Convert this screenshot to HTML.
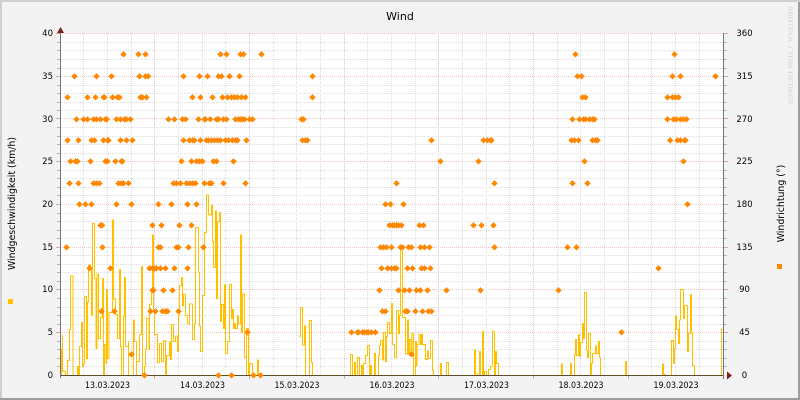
<!DOCTYPE html>
<html><head><meta charset="utf-8"><title>Wind</title>
<style>
html,body{margin:0;padding:0;width:800px;height:400px;overflow:hidden;background:#f3f3f3}
svg{display:block}
text{font-family:"DejaVu Sans","Liberation Sans",sans-serif;fill:#000}
</style></head><body>
<svg width="800" height="400" viewBox="0 0 800 400" xmlns="http://www.w3.org/2000/svg">
<defs>
<marker id="m" markerUnits="userSpaceOnUse" viewBox="-12 -12 24 24" markerWidth="24" markerHeight="24" refX="0" refY="0">
<path d="M.5-9.600L10.100 0 .5 9.600-9.100 0Z" fill="#ff8800"/>
</marker>
</defs>
<rect width="800" height="400" fill="#f3f3f3"/>
<path d="M0 1H800M1 0V400" stroke="#cfcfcf" stroke-width="2" fill="none" shape-rendering="crispEdges"/>
<path d="M0 399H800M799 2V400" stroke="#9e9e9e" stroke-width="2" fill="none" shape-rendering="crispEdges"/>
<rect x="60" y="33" width="663" height="342" fill="#fff"/>
<g shape-rendering="crispEdges" fill="none" stroke-width="1" stroke-dasharray="1 1">
<path stroke="#dddddd" d="M60 366.5H723M60 358.5H723M60 349.5H723M60 341.5H723M60 324.5H723M60 315.5H723M60 307.5H723M60 298.5H723M60 281.5H723M60 272.5H723M60 264.5H723M60 255.5H723M60 238.5H723M60 230.5H723M60 221.5H723M60 213.5H723M60 195.5H723M60 187.5H723M60 178.5H723M60 170.5H723M60 153.5H723M60 144.5H723M60 136.5H723M60 127.5H723M60 110.5H723M60 102.5H723M60 93.5H723M60 85.5H723M60 68.5H723M60 59.5H723M60 50.5H723M60 42.5H723"/>
<path stroke="#dddddd" d="M83.5 33V375M107.5 33V375M131.5 33V375M178.5 33V375M202.5 33V375M225.5 33V375M273.5 33V375M296.5 33V375M320.5 33V375M367.5 33V375M391.5 33V375M415.5 33V375M462.5 33V375M486.5 33V375M509.5 33V375M557.5 33V375M580.5 33V375M604.5 33V375M651.5 33V375M675.5 33V375M699.5 33V375"/>
<path stroke="#ecc2c2" d="M60 33.5H723M60 76.5H723M60 118.5H723M60 161.5H723M60 204.5H723M60 247.5H723M60 289.5H723M60 332.5H723"/>
<path stroke="#ecc2c2" d="M154.5 33V375M249.5 33V375M344.5 33V375M438.5 33V375M533.5 33V375M628.5 33V375"/>
</g>
<g shape-rendering="crispEdges" fill="none">
<path stroke="#b4b4b4" d="M57 42.5H60M57 50.5H60M57 59.5H60M57 68.5H60M57 85.5H60M57 93.5H60M57 102.5H60M57 110.5H60M57 127.5H60M57 136.5H60M57 144.5H60M57 153.5H60M57 170.5H60M57 178.5H60M57 187.5H60M57 195.5H60M57 213.5H60M57 221.5H60M57 230.5H60M57 238.5H60M57 255.5H60M57 264.5H60M57 272.5H60M57 281.5H60M57 298.5H60M57 307.5H60M57 315.5H60M57 324.5H60M57 341.5H60M57 349.5H60M57 358.5H60M57 366.5H60M724 42.5H727M724 50.5H727M724 59.5H727M724 68.5H727M724 85.5H727M724 93.5H727M724 102.5H727M724 110.5H727M724 127.5H727M724 136.5H727M724 144.5H727M724 153.5H727M724 170.5H727M724 178.5H727M724 187.5H727M724 195.5H727M724 213.5H727M724 221.5H727M724 230.5H727M724 238.5H727M724 255.5H727M724 264.5H727M724 272.5H727M724 281.5H727M724 298.5H727M724 307.5H727M724 315.5H727M724 324.5H727M724 341.5H727M724 349.5H727M724 358.5H727M724 366.5H727"/>
<path stroke="#d0a8a8" d="M56 33.5H60M56 76.5H60M56 118.5H60M56 161.5H60M56 204.5H60M56 247.5H60M56 289.5H60M56 332.5H60M724 33.5H728M724 76.5H728M724 118.5H728M724 161.5H728M724 204.5H728M724 247.5H728M724 289.5H728M724 332.5H728"/>
<path stroke="#d0a8a8" d="M154.5 375V379M249.5 375V379M344.5 375V379M438.5 375V379M533.5 375V379M628.5 375V379"/>
</g>
<g transform="translate(0,200) scale(.33333)" fill="none" stroke="#ffc000" stroke-width="3" stroke-linejoin="miter" shape-rendering="crispEdges">
<path d="M184 526V445V505H188V405V515H197V526H202V482H209V388H212V228H219V526H232V500H235V526H238V440H244V367H247V500H250V490H253V290H259V475H262V306H265V195H271V205H274V345H277V70H283V235H288V445H291V222H296V415H301V352H307V235H310V526H313V433H318V490H320V270H323V475H327V337H338V60H341V297H346V343H352V415H358V208H361V440H364V526H370V350H373V232H376V440H385V425V526H397V526H400V360H403V425H409V526V485H412H418V403H424V200H427V526H433V500H436V448H440V355H447V448H449V313H455V270H458V105H461V332H464V403H470H473V487H478V430H484V484H490V422H496V526H499V466H505H508V426H511V478H514V373H520V424H526V408H532V455H535V347H538V256H544V232H547V317H550V283H556V347H562V372H568V312H571H577V418H583V372H586V82H592H595V217H598V378H601V455H607V287H613V97H619V-15H625V45H634V16H637V125H640V203H646V33H649V295H652V65H658V37H661V365H664V313H670V385H673V255H676V460H682V425H688V253H694V355H697V328H700V385H703V370H706V385H712V348H715V372H718H721V105H724V398H727V282H733V472H739V526V385H745V526H748V490H757V526H772V480H775V517V526H778"/>
</g>
<g transform="translate(270,200) scale(.33333)" fill="none" stroke="#ffc000" stroke-width="3" shape-rendering="crispEdges">
<path d="M88 410H91V322H98V435H104V378H107V526H119V361H125V487H128V526M241 526V463H247V526H253V487H256V526H262V472H268V526H274V496H277V526H280V490H286V466H292V436H298V526H301V497H304V526H313V460H316V526H325V466H328V436H331V421H337V480H340V397H346V485H349V410H352V367H358V400H361H364V310H367V433H373V472H376H379V331H385V400H388V345H391V150H397V352H406V462H412V360H415V460H418V418H423V470H426V400H429H430V526H436V424H439V497H441V433H447V403H451V433H454V403H457V433H466V478H472V453H475V475H481V421H487V511H490V526M511 526V490H514V526M529 526V487H535V526M613 526V450H616V522H622V526H628V454H631V526H637V394H640V526H643V514H649V526H655V508H661V500H667V394H673V526H676V454H679V490H685V526"/>
</g>
<g transform="translate(530,200) scale(.33333)" fill="none" stroke="#ffc000" stroke-width="3" shape-rendering="crispEdges">
<path d="M94 526V492H97V526M121 526V490H124V526H133V463H136V418H139V466H145V403H148V470H151V427H157V370H160V415H163V277H169V451H172V472H175V400H181V526H184V490H187V460H196V438H199V460H205V424H208V472H211V526M286 526V484H289V526M397 526V492H400V523H406V526M424 526V421H430V490H433V445H436V348H440V388H445V430H449V360H451V268H460V356H463V316H472V455H475V400H481V283H484V397H487V496H493V526M574 526V388H580"/>
</g>
<path d="M60 375.5H723" stroke="#5e4c22" stroke-width="1" shape-rendering="crispEdges" fill="none"/>
<path d="M60.5 30V378M723.5 33V379" stroke="#777" stroke-width="1" shape-rendering="crispEdges" fill="none"/>
<path d="M60.5 27L64 33H57Z" fill="#7a2020"/>
<path d="M727 371.500L732 375.500L727 379.500Z" fill="#7a2020"/>
<g transform="scale(.33333)" fill="none" stroke="none" marker-start="url(#m)" marker-mid="url(#m)" marker-end="url(#m)">
<polyline points="370,163 415,163 436,163 661,163 679,163 721,163 730,163 784,163"/>
<polyline points="223,229 289,229 334,229 418,229 436,229 444,229 550,229 598,229 622,229 655,229 664,229 688,229 718,229"/>
<polyline points="202,292 262,292 286,292 310,292 313,292 337,292 352,292 358,292 421,292 427,292 439,292 577,292 601,292 637,292 667,292 682,292 694,292 703,292 712,292 724,292 736,292"/>
<polyline points="229,358 250,358 262,358 280,358 289,358 301,358 316,358 320,358 349,358 361,358 373,358 379,358 391,358 505,358 523,358 547,358 556,358 595,358 613,358 616,358 630,358 649,358 655,358 670,358 679,358 706,358 715,358 721,358 727,358 733,358 748,358 757,358"/>
<polyline points="202,421 235,421 274,421 283,421 310,421 322,421 325,421 361,421 379,421 397,421 550,421 568,421 577,421 583,421 601,421 619,421 625,421 634,421 643,421 652,421 661,421 676,421 685,421 697,421 706,421 712,421 739,421"/>
<polyline points="211,484 226,484 232,484 271,484 316,484 322,484 346,484 364,484 367,484 544,484 574,484 589,484 598,484 607,484 640,484 649,484 700,484"/>
<polyline points="208,550 235,550 280,550 289,550 298,550 355,550 364,550 370,550 385,550 520,550 529,550 541,550 559,550 568,550 577,550 586,550 613,550 628,550 634,550 670,550 736,550"/>
<polyline points="238,613 256,613 274,613 349,613 394,613 475,613 514,613 562,613 589,613"/>
<polyline points="301,676 306,676 457,676 484,676 538,676 574,676"/>
<polyline points="199,742 307,742 475,742 481,742 529,742 535,742 565,742 610,742"/>
<polyline points="268,805 331,805 448,805 457,805 463,805 469,805 481,805 496,805 523,805 562,805"/>
<polyline points="457,871 460,871 490,871 517,871"/>
<polyline points="304,934 343,934 451,934 466,934 487,934 496,934 502,934 535,934"/>
<polyline points="742,997 394,1063 433,1126 655,1126 694,1126 760,1126 781,1126"/>
</g>
<g transform="translate(270,0) scale(.33333)" fill="none" stroke="none" marker-start="url(#m)" marker-mid="url(#m)" marker-end="url(#m)">
<polyline points="127,229 127,292 94,358 100,358 97,421 106,421 112,421 484,421 640,421 652,421 661,421 664,421 511,484 625,484 379,550 673,550"/>
<polyline points="346,613 361,613 400,613"/>
<polyline points="358,676 367,676 373,676 379,676 385,676 394,676 448,676 460,676 610,676 634,676 670,676"/>
<polyline points="331,742 340,742 349,742 364,742 391,742 397,742 415,742 424,742 451,742 463,742 478,742 673,742"/>
<polyline points="334,805 352,805 364,805 373,805 379,805 412,805 427,805 454,805 463,805 481,805"/>
<polyline points="328,871 385,871 403,871 418,871 439,871 451,871 472,871 529,871 631,871"/>
<polyline points="337,934 346,934 406,934 412,934 436,934 457,934 475,934 484,934"/>
<polyline points="244,997 262,997 265,997 277,997 283,997 289,997 295,997 304,997 316,997 424,1063"/>
</g>
<g transform="translate(530,0) scale(.33333)" fill="none" stroke="none" marker-start="url(#m)" marker-mid="url(#m)" marker-end="url(#m)">
<polyline points="136,163 433,163 142,229 154,229 427,229 451,229 556,229"/>
<polyline points="157,292 166,292 412,292 427,292 436,292 445,292"/>
<polyline points="127,358 148,358 160,358 166,358 178,358 187,358 193,358 412,358 430,358 438,358 451,358 460,358 469,358"/>
<polyline points="124,421 133,421 145,421 187,421 196,421 202,421 420,421 442,421 451,421 463,421 466,421"/>
<polyline points="163,484 460,484 127,550 172,550 472,613 112,742 139,742 385,805 85,871 274,997"/>
</g>
<rect x="8" y="299" width="5" height="5" fill="#ffc000"/>
<rect x="777" y="264" width="5" height="5" fill="#ff8800"/>
<g font-size="8.500" text-anchor="end">
<text x="53" y="36">40</text><text x="53" y="79">35</text><text x="53" y="122">30</text><text x="53" y="164">25</text><text x="53" y="207">20</text><text x="53" y="250">15</text><text x="53" y="292">10</text><text x="53" y="335">5</text><text x="53" y="378">0</text>
</g>
<g font-size="8.500" text-anchor="middle">
<text x="744.500" y="36">360</text><text x="744.500" y="79">315</text><text x="744.500" y="122">270</text><text x="744.500" y="164">225</text><text x="744.500" y="207">180</text><text x="744.500" y="250">135</text><text x="744.500" y="292">90</text><text x="744.500" y="335">45</text><text x="744.500" y="378">0</text>
<text x="107.500" y="388" textLength="45" lengthAdjust="spacingAndGlyphs">13.03.2023</text>
<text x="202.500" y="388" textLength="45" lengthAdjust="spacingAndGlyphs">14.03.2023</text>
<text x="297" y="388" textLength="45" lengthAdjust="spacingAndGlyphs">15.03.2023</text>
<text x="392" y="388" textLength="45" lengthAdjust="spacingAndGlyphs">16.03.2023</text>
<text x="486.500" y="388" textLength="45" lengthAdjust="spacingAndGlyphs">17.03.2023</text>
<text x="581" y="388" textLength="45" lengthAdjust="spacingAndGlyphs">18.03.2023</text>
<text x="676" y="388" textLength="45" lengthAdjust="spacingAndGlyphs">19.03.2023</text>
</g>
<text x="400" y="20" font-size="11" text-anchor="middle">Wind</text>
<text transform="translate(15,203.500) rotate(-90)" font-size="9.400" text-anchor="middle">Windgeschwindigkeit (km/h)</text>
<text transform="translate(784,203.500) rotate(-90)" font-size="9.400" text-anchor="middle">Windrichtung (°)</text>
<text transform="translate(788,6) rotate(90)" font-size="6.500" style="fill:#d4d4d4" textLength="98" lengthAdjust="spacingAndGlyphs">RRDTOOL / TOBI OETIKER</text>
</svg>
</body></html>
